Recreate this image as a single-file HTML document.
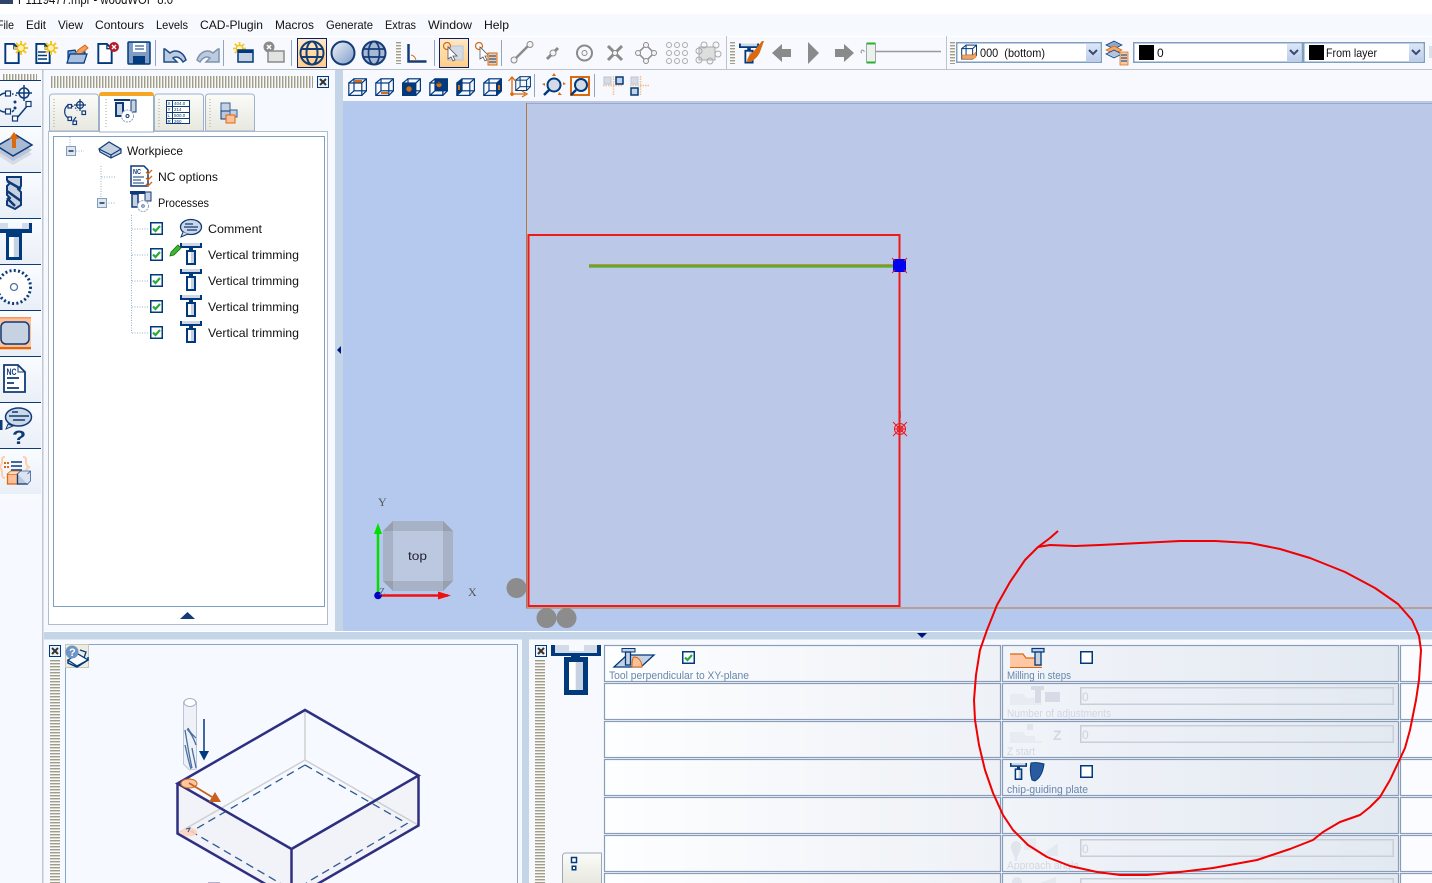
<!DOCTYPE html>
<html><head><meta charset="utf-8"><style>
html,body{margin:0;padding:0;width:1432px;height:883px;overflow:hidden;background:#f6f9ff}
svg{display:block}
text{font-family:"Liberation Sans",sans-serif;font-size:12px;fill:#111;white-space:pre}
</style></head><body>
<svg width="1432" height="883" viewBox="0 0 1432 883" xmlns="http://www.w3.org/2000/svg">
<defs>
<pattern id="gh" width="10" height="3" patternUnits="userSpaceOnUse"><rect width="10" height="1" fill="#a09e88"/><rect y="1" width="10" height="1" fill="#d4d3c6"/></pattern>
<pattern id="gv" width="3" height="10" patternUnits="userSpaceOnUse"><rect width="1" height="10" fill="#a09e88"/><rect x="1" width="1" height="10" fill="#d4d3c6"/></pattern>
<linearGradient id="cell" x1="0" x2="1" y1="0" y2="0"><stop offset="0" stop-color="#fdfeff"/><stop offset="1" stop-color="#eef1f6"/></linearGradient>
<linearGradient id="cell2" x1="0" x2="1" y1="0" y2="0"><stop offset="0" stop-color="#f1f4f9"/><stop offset="1" stop-color="#e3e9f1"/></linearGradient>
<linearGradient id="side" x1="0" x2="0" y1="0" y2="1"><stop offset="0" stop-color="#fafcff"/><stop offset="1" stop-color="#e9eff7"/></linearGradient>
<linearGradient id="act" x1="0" x2="0" y1="0" y2="1"><stop offset="0" stop-color="#ffe9c4"/><stop offset="1" stop-color="#ffcd86"/></linearGradient>
<linearGradient id="tab" x1="0" x2="0" y1="0" y2="1"><stop offset="0" stop-color="#fbfbf9"/><stop offset="1" stop-color="#e8e8e0"/></linearGradient>
<linearGradient id="btn" x1="0" x2="0" y1="0" y2="1"><stop offset="0" stop-color="#dbe6f8"/><stop offset="1" stop-color="#bccdec"/></linearGradient>
<linearGradient id="sph" x1="0" x2="1" y1="0" y2="1"><stop offset="0" stop-color="#eef2fa"/><stop offset="1" stop-color="#7f9cc8"/></linearGradient>
<linearGradient id="bodyg" x1="0" x2="1" y1="0" y2="0"><stop offset="0" stop-color="#fff"/><stop offset=".45" stop-color="#fff"/><stop offset=".5" stop-color="#c6d2e2"/><stop offset="1" stop-color="#c6d2e2"/></linearGradient>

<symbol id="tool" viewBox="0 0 22 22" overflow="visible">
<path fill="#003a7d" d="M0 0h22v5H0z"/><path fill="#cfd8e6" d="M2 0h18v3H2z"/><path fill="#003a7d" d="M9 5h4v3H9z"/>
<path fill="#003a7d" d="M6 7h10v15H6z"/><rect x="8" y="9" width="6" height="11" fill="url(#bodyg)"/>
</symbol>
<symbol id="chk" viewBox="0 0 13 13"><rect x=".75" y=".75" width="11.5" height="11.5" fill="#fff" stroke="#003a7d" stroke-width="1.5"/><path d="M3 6.5l2.5 2.5L10 4" fill="none" stroke="#2aa83a" stroke-width="2.2"/></symbol>
<symbol id="cb" viewBox="0 0 13 13"><rect x=".75" y=".75" width="11.5" height="11.5" fill="#fff" stroke="#003a7d" stroke-width="1.5"/></symbol>
<symbol id="cube" viewBox="0 0 19 18"><g fill="none" stroke="#003a7d" stroke-width="1.2"><rect x="6" y=".8" width="12.4" height="12"/><rect x=".8" y="5" width="13" height="12.4"/><path d="M.8 5L6 .8M13.8 5l4.6-4.2M13.8 17.4l4.6-4.6M.8 17.4L6 12.8"/></g></symbol>
<symbol id="minus" viewBox="0 0 10 10"><rect x=".5" y=".5" width="9" height="9" fill="#dde6f2" stroke="#7f9fc0"/><path d="M2.5 5h5" stroke="#000" stroke-width="1.2"/></symbol>
<symbol id="closex" viewBox="0 0 12 12"><rect x=".5" y=".5" width="11" height="11" fill="#eef2f8" stroke="#003a7d"/><path d="M3 3l6 6M9 3l-6 6" stroke="#333" stroke-width="2"/></symbol>
<symbol id="star" viewBox="0 0 14 14"><path d="M7 0v14M0 7h14M2 2l10 10M12 2L2 12" stroke="#f7c82a" stroke-width="2"/><circle cx="7" cy="7" r="3.4" fill="#fff5b0" stroke="#f3b600"/></symbol>
<symbol id="doc" viewBox="0 0 16 22"><path d="M1 1h9l5 5v15H1z" fill="#fff" stroke="#003a7d" stroke-width="2"/><path d="M10 1v5h5" fill="none" stroke="#003a7d" stroke-width="1.4"/></symbol>
</defs>

<!-- chrome -->
<rect x="0" y="0" width="1432" height="14" fill="#fff"/>
<rect x="0" y="0" width="13" height="4" fill="#2f4468"/>
<text x="18" y="4" textLength="155" lengthAdjust="spacingAndGlyphs" style="font-size:14px">P1119477.mpr - woodWOP 8.0</text>
<rect x="0" y="14" width="1432" height="22" fill="#f6f9fe"/>
<rect x="0" y="36" width="1432" height="1" fill="#fff"/>
<rect x="0" y="37" width="1432" height="32" fill="#f7f9fe"/>
<rect x="0" y="69" width="1432" height="1.5" fill="#bcc4cc"/>
<g>
<text x="-3" y="29" textLength="17" lengthAdjust="spacingAndGlyphs">File</text>
<text x="26" y="29" textLength="20" lengthAdjust="spacingAndGlyphs">Edit</text>
<text x="58" y="29" textLength="25" lengthAdjust="spacingAndGlyphs">View</text>
<text x="95" y="29" textLength="49" lengthAdjust="spacingAndGlyphs">Contours</text>
<text x="156" y="29" textLength="32" lengthAdjust="spacingAndGlyphs">Levels</text>
<text x="200" y="29" textLength="63" lengthAdjust="spacingAndGlyphs">CAD-Plugin</text>
<text x="275" y="29" textLength="39" lengthAdjust="spacingAndGlyphs">Macros</text>
<text x="326" y="29" textLength="47" lengthAdjust="spacingAndGlyphs">Generate</text>
<text x="385" y="29" textLength="31" lengthAdjust="spacingAndGlyphs">Extras</text>
<text x="428" y="29" textLength="44" lengthAdjust="spacingAndGlyphs">Window</text>
<text x="484" y="29" textLength="25" lengthAdjust="spacingAndGlyphs">Help</text>
</g>

<!-- main toolbar icons -->
<use href="#doc" x="4" y="43" width="16" height="21"/><use href="#star" x="14" y="41" width="14" height="14"/>
<use href="#doc" x="35" y="43" width="16" height="21"/><path d="M38 52h9M38 55.500h9M38 59h9" stroke="#003a7d" stroke-width="1.500"/><use href="#star" x="44" y="41" width="14" height="14"/>
<path d="M68 51l7-1 1 2h9l-1 11H68z" fill="#7f9cc4" stroke="#003a7d" stroke-width="1.200"/><path d="M74 56l4-6 7-5 3 3-6 5-2 3z" fill="#f3a060" stroke="#d96a10"/><path d="M67 63l3-9h17l-3 9z" fill="#a9bfdf" stroke="#003a7d" stroke-width="1.200"/>
<use href="#doc" x="97" y="43" width="16" height="21"/><circle cx="114" cy="47" r="5" fill="#b51c28"/><path d="M112 45l4 4M116 45l-4 4" stroke="#fff" stroke-width="1.400"/>
<path d="M129 42h20a1 1 0 0 1 1 1v20a1 1 0 0 1-1 1h-20a1 1 0 0 1-1-1V43a1 1 0 0 1 1-1z" fill="#7f9cc4" stroke="#003a7d" stroke-width="1.500"/><rect x="133" y="43" width="13" height="9" fill="#fff"/><path d="M135 46h9M135 49h9" stroke="#003a7d"/><rect x="133" y="56" width="12" height="8" fill="#003a7d"/>
<path d="M155.500 40v26M223.500 40v26M291.500 40v26M434.500 40v26M501.500 40v26" stroke="#8ea6c2"/>
<path d="M164 49v13h13l-4-4c3-2 7-1 10 4l3-2c-3-9-11-11-16-7l-5-4z" fill="#bccbe0" stroke="#1d4d88" stroke-width="1.500"/>
<path d="M219 49v13h-13l4-4c-3-2-7-1-10 4l-3-2c3-9 11-11 16-7l5-4z" fill="#bccbe0" stroke="#7f93ae" stroke-width="1.500"/>
<use href="#star" x="233" y="42" width="13" height="13"/><rect x="238" y="50" width="15" height="12" fill="#c6d2e2" stroke="#003a7d" stroke-width="1.500"/><rect x="238" y="50" width="15" height="3" fill="#003a7d"/>
<circle cx="269" cy="47" r="5.500" fill="#8a8a8a"/><path d="M267 45l4 4M271 45l-4 4" stroke="#fff" stroke-width="1.500"/><rect x="268" y="51" width="16" height="11" fill="#e2e2e2" stroke="#8a8a8a" stroke-width="1.500"/>
<rect x="297.500" y="38.500" width="29" height="29" fill="url(#act)" stroke="#0a1f70"/>
<g fill="none" stroke="#143d78" stroke-width="2"><circle cx="312" cy="53" r="11.500"/><ellipse cx="312" cy="53" rx="5.500" ry="11.500"/><path d="M301 49h22M301 57h22"/></g>
<circle cx="343" cy="53" r="11.500" fill="url(#sph)" stroke="#143d78" stroke-width="2"/>
<circle cx="374" cy="53" r="11.500" fill="#a8b9d4" stroke="#143d78" stroke-width="2"/><g fill="none" stroke="#143d78" stroke-width="1.700"><ellipse cx="374" cy="53" rx="5.500" ry="11.500"/><path d="M363 49h22M363 57h22"/></g>
<rect x="396" y="41" width="5" height="23" fill="url(#gh)"/>
<path d="M408.500 44v17.500h18" fill="none" stroke="#143d78" stroke-width="2.500"/><path d="M411 55a6 6 0 0 1 5 6" fill="none" stroke="#d96a10"/>
<rect x="439.500" y="38.500" width="29" height="29" fill="url(#act)" stroke="#0a1f70"/><rect x="448" y="46" width="15" height="14" fill="#d4dbe6" stroke="#b6c5da"/><circle cx="447" cy="46" r="3.500" fill="none" stroke="#d96a10" stroke-width="1.200"/><path d="M448 47v12l3-2 2 4 2-1-2-4h4z" fill="#fff" stroke="#555" stroke-width=".8"/>
<circle cx="479" cy="46" r="3.500" fill="none" stroke="#d96a10" stroke-width="1.200"/><path d="M480 47v12l3-2 2 4 2-1-2-4h4z" fill="#fff" stroke="#555" stroke-width=".8"/><rect x="488" y="53" width="9" height="12" fill="#f4c9a4" stroke="#d96a10"/><path d="M489 56h7M489 59h7M489 62h7" stroke="#003a7d"/>
<!-- snap icons -->
<g fill="none" stroke="#8a8a8a">
<path d="M515 59l14-14" stroke-width="2.500"/><circle cx="514" cy="60" r="3" fill="#f4f4f4"/><circle cx="530" cy="44.500" r="3" fill="#f4f4f4"/>
<path d="M547 59l11-11" stroke-width="3"/><circle cx="553" cy="53" r="3" fill="#f4f4f4"/>
<circle cx="584.500" cy="53" r="7.500" stroke-width="2"/><circle cx="584.500" cy="53" r="2.500"/>
<path d="M608 46l14 14M622 46l-14 14" stroke-width="3"/><circle cx="615" cy="53" r="2.500" fill="#f4f4f4"/>
<path d="M646 45l8 8-8 8-8-8z" stroke-width="1.500"/><circle cx="646" cy="45" r="2.500" fill="#f4f4f4"/><circle cx="654" cy="53" r="2.500" fill="#f4f4f4"/><circle cx="646" cy="61" r="2.500" fill="#f4f4f4"/><circle cx="638" cy="53" r="2.500" fill="#f4f4f4"/>
<g stroke="#aaa"><circle cx="669" cy="45" r="2.500"/><circle cx="677" cy="45" r="2.500"/><circle cx="685" cy="45" r="2.500"/><circle cx="669" cy="53" r="2.500"/><circle cx="677" cy="53" r="2.500"/><circle cx="685" cy="53" r="2.500"/><circle cx="669" cy="61" r="2.500"/><circle cx="677" cy="61" r="2.500"/><circle cx="685" cy="61" r="2.500"/></g>
<rect x="699" y="47" width="16" height="13" fill="#dedede" stroke="#aaa"/><g stroke="#aaa"><circle cx="699" cy="51" r="3"/><circle cx="704" cy="45" r="3"/><circle cx="716" cy="45" r="3"/><circle cx="718" cy="54" r="3"/><circle cx="699" cy="60" r="3"/><circle cx="710" cy="61" r="3"/></g>
</g>
<path d="M726.500 36v33M946.500 36v33" stroke="#bcc4cc"/>
<rect x="730" y="41" width="5" height="23" fill="url(#gh)"/><rect x="950" y="41" width="5" height="23" fill="url(#gh)"/>
<use href="#tool" x="739" y="43" width="20" height="21"/><path d="M747 62c0-5 4-9 7-11l8-10h2l-4 11c-2 5-8 11-13 10z" fill="#d96a10"/>
<path d="M772 53l10-9v5h9v8h-9v5z" fill="#8a8a8a"/><path d="M808 42l11 11-11 11z" fill="#8a8a8a"/><path d="M854 53l-10-9v5h-9v8h9v5z" fill="#8a8a8a"/>
<path d="M876 51.500h65" stroke="#999" stroke-width="1.500"/><path d="M862 53a1.500 1.500 0 1 1 2-1" fill="none" stroke="#999"/><rect x="866.500" y="43.500" width="9" height="19" rx="1" fill="#eef0ec" stroke="#9aa"/><rect x="866.500" y="42.500" width="9" height="2" fill="#2ab02e"/><rect x="866.500" y="61.500" width="9" height="2" fill="#2ab02e"/>

<!-- combos -->
<g fill="#fff" stroke="#7f9fc0" stroke-width="1.500">
<rect x="956.750" y="42.750" width="144.500" height="19.500"/><rect x="1133.750" y="42.750" width="168.500" height="19.500"/><rect x="1303.750" y="42.750" width="120.500" height="19.500"/>
</g>
<g fill="url(#btn)"><rect x="1086" y="44" width="14" height="17"/><rect x="1287" y="44" width="14" height="17"/><rect x="1409" y="44" width="14" height="17"/></g>
<g fill="none" stroke="#3b4b6c" stroke-width="2"><path d="M1089 50l4 4 4-4M1290 50l4 4 4-4M1412 50l4 4 4-4"/></g>
<use href="#cube" x="961" y="44" width="16" height="16"/><path d="M962 55h11l3-3v5l-3 2h-11z" fill="#f0a468" stroke="#d96a10" stroke-width=".6"/>
<text x="980" y="57" textLength="65" lengthAdjust="spacingAndGlyphs" xml:space="preserve">000  (bottom)</text>
<path d="M1106 45l8-4 8 4-8 4z" fill="#8fa8c9" stroke="#003a7d" stroke-width=".7"/><path d="M1106 50l8-4 8 4-8 4z" fill="#f3a868" stroke="#d96a10" stroke-width=".7"/><path d="M1106 54l8-4 8 4-8 4z" fill="#b3c4dc" stroke="#003a7d" stroke-width=".7"/><rect x="1120" y="52" width="8" height="13" fill="#f4c9a4" stroke="#d96a10" stroke-width=".7"/><path d="M1121 55h6M1121 58h6M1121 61h6" stroke="#003a7d"/>
<rect x="1139" y="45" width="15" height="15" fill="#000"/><text x="1157" y="57">0</text>
<rect x="1309" y="45" width="15" height="15" fill="#000"/><text x="1326" y="57" textLength="51" lengthAdjust="spacingAndGlyphs">From layer</text>
<rect x="1429" y="46" width="3" height="12" fill="#d8e0ec"/>

<!-- left column -->
<rect x="0" y="70" width="42" height="430" fill="#f8fafe"/>
<rect x="2" y="74" width="35" height="6" fill="url(#gv)"/>
<rect x="42" y="70" width="1.500" height="813" fill="#c0c8d2"/>
<g fill="url(#side)"><rect x="0" y="81" width="41" height="45"/><rect x="0" y="127" width="41" height="45"/><rect x="0" y="173" width="41" height="45"/><rect x="0" y="219" width="41" height="45"/><rect x="0" y="265" width="41" height="45"/><rect x="0" y="311" width="41" height="45"/><rect x="0" y="357" width="41" height="45"/><rect x="0" y="403" width="41" height="45"/><rect x="0" y="449" width="41" height="45"/></g>
<path d="M0 80.500h41M0 126.500h41M0 172.500h41M0 218.500h41M0 264.500h41M0 310.500h41M0 356.500h41M0 402.500h41M0 448.500h41" stroke="#0f3a78"/>
<!-- ico1 -->
<g fill="none" stroke="#0f3a78"><path d="M-2 97c3-3 5-4 8-4M-2 109c3 2 4 3 7 3M12 112l2-2M17 118l11-13" stroke-width="1.500"/><path d="M12 94c3 0 6 2 4 3" stroke-dasharray="1.500 2" stroke-width="1.500"/><circle cx="15" cy="102" r="1" fill="#0f3a78"/><circle cx="15" cy="108" r="1" fill="#0f3a78"/><rect x="5.500" y="91" width="5" height="5" fill="#fff" stroke-width="1.200"/><rect x="5.500" y="109" width="5" height="5" fill="#fff" stroke-width="1.200"/><rect x="26" y="101.500" width="5" height="5" fill="#fff" stroke-width="1.200"/><rect x="12.500" y="116" width="5" height="5" fill="#fff" stroke-width="1.200"/><circle cx="24" cy="93" r="5" stroke-width="1.500"/><path d="M24 85v16M16 93h16" stroke-width="1.500"/></g>
<!-- ico2 -->
<path d="M-3 155l16 10 19-11-16-10z" fill="#d6dce6"/><path d="M-3 151l16 10 19-11-16-10z" fill="#b9c6da"/><path d="M-3 146l16 10 19-11-16-10z" fill="#a9bad3" stroke="#0f3a78" stroke-width="1.500"/><path d="M14 132l-5 7h3v9h4v-9h3z" fill="#d96a10"/>
<!-- drill -->
<path d="M7 177h14v9l-3 3 3 3v13l-6 4-8-4v-4l3-3-3-3v-9l3-3-3-3z" fill="#c6d2e2" stroke="#0f3a78" stroke-width="2"/><path d="M7 181l14 8M7 191l14 10M7 198l8 8" stroke="#0f3a78" stroke-width="2.500"/>
<!-- T -->
<path fill="#003a7d" d="M0 223h32v10H0z"/><path fill="#d3dbe8" d="M0 223h29v6H0z"/><path fill="#f6f9ff" d="M8 223h14v5H8z"/><path fill="#003a7d" d="M6 233h16v27H6z"/><rect x="9" y="237" width="10" height="20" fill="url(#bodyg)"/>
<!-- saw -->
<circle cx="14" cy="287" r="15.500" fill="#fff"/><circle cx="14" cy="287" r="16.500" fill="none" stroke="#0f3a78" stroke-width="3" stroke-dasharray="2 2.300"/><circle cx="14" cy="287" r="3.500" fill="#fff" stroke="#53739c" stroke-width="1.300"/>
<!-- contour active -->
<rect x="0" y="317" width="31" height="33" fill="#ffbf98"/><rect x="0" y="347" width="31" height="2" fill="#d96a10"/><rect x="0" y="317" width="31" height="1.500" fill="#ee9a60"/>
<rect x="1" y="322" width="28" height="22" rx="5" fill="#c6d2e2" stroke="#0f3a78" stroke-width="1.500"/>
<!-- NC doc -->
<path d="M4 365h14l7 7v20H4z" fill="#fff" stroke="#0f3a78" stroke-width="1.800"/><path d="M18 365v7h7" fill="none" stroke="#0f3a78"/><text x="6.500" y="375" textLength="10" lengthAdjust="spacingAndGlyphs" style="font-size:9px;font-weight:bold;fill:#0f3a78">NC</text><path d="M7 378h12M7 383h7M7 388h12" stroke="#0f3a78" stroke-width="1.800"/>
<!-- help -->
<ellipse cx="18.500" cy="417" rx="13" ry="9" fill="#cdd8e6" stroke="#0f3a78" stroke-width="1.500"/><path d="M8 424l-2 5 7-3z" fill="#cdd8e6" stroke="#0f3a78"/><path d="M12 412h6M9 416h20M13 420h12" stroke="#0f3a78" stroke-width="1.500"/>
<rect x="0" y="420" width="2.500" height="10" fill="#0f3a78"/>
<text x="12" y="444" textLength="14" lengthAdjust="spacingAndGlyphs" style="font-size:19px;font-weight:bold;fill:#0f3a78">?</text>
<!-- list/brace -->
<path d="M5 457c-3 0-3 1-3 5s-2 4-3 5c1 1 3 1 3 5s0 6 3 6M23 457c3 0 3 1 3 5s2 4 3 5c-1 1-3 1-3 5" fill="none" stroke="#ffccb0" stroke-width="2"/>
<path d="M4 462h2v2H4zM7 462h2v2H7zM4 466h2v2H4zM7 466h2v2H7z" fill="#d96a10"/><path d="M11 462h11M11 466h11M11 470h11" stroke="#0f3a78" stroke-width="1.500"/>
<rect x="7.500" y="474" width="10" height="10" fill="#ffbf98" stroke="#d96a10" stroke-width="1.300"/><path d="M7.500 474l3-3h10l-3 3" fill="#ffd8c0" stroke="#d96a10" stroke-width=".8"/><rect x="17.500" y="474" width="10" height="10" fill="#b8c8de" stroke="#0f3a78" stroke-width="1.300"/><path d="M17.500 474l3-3h10v10l-3 3M27.500 474l3-3" fill="#dbe4f0" stroke="#33609a" stroke-width=".8"/>

<!-- tree panel -->
<rect x="44" y="70" width="291" height="562" fill="#f6f9ff"/>
<rect x="50" y="76" width="263" height="12" fill="url(#gv)"/>
<use href="#closex" x="317" y="76" width="12" height="12"/>
<rect x="48.500" y="131.500" width="279" height="493" fill="#fff" stroke="#b4bcc6"/>
<!-- tabs -->
<path d="M49.500 131v-34a3 3 0 0 1 3-3h43a3 3 0 0 1 3 3v34z" fill="url(#tab)" stroke="#9db2c8"/>
<path d="M154.500 131v-34a3 3 0 0 1 3-3h43a3 3 0 0 1 3 3v34z" fill="url(#tab)" stroke="#9db2c8"/>
<path d="M205.500 131v-34a3 3 0 0 1 3-3h43a3 3 0 0 1 3 3v34z" fill="url(#tab)" stroke="#9db2c8"/>
<path d="M99.500 132V96a3 3 0 0 1 3-3h48a3 3 0 0 1 3 3v36z" fill="#fff" stroke="#9db2c8"/>
<path d="M99 96v-1a3 3 0 0 1 3-3h49a3 3 0 0 1 3 3v1z" fill="#f5a623"/>
<path d="M54 99v28M106 99v28M159 99v28M210 99v28" stroke="#a8a690" stroke-dasharray="1 2"/>
<!-- tab icons -->
<g fill="none" stroke="#0f3a78" stroke-width="1.200"><path d="M68 105a8 8 0 0 0 0 13"/><path d="M72 106c3 1 5 3 5 5" stroke-dasharray="1.500 2"/><path d="M76 117l-3 4" /><rect x="68" y="104.500" width="3.500" height="3.500" fill="#fff"/><rect x="68" y="117" width="3.500" height="3.500" fill="#fff"/><rect x="82" y="111" width="3.500" height="3.500" fill="#fff"/><rect x="73" y="121" width="3.500" height="3.500" fill="#fff"/><circle cx="80" cy="105" r="3.500"/><path d="M80 99v12M74 105h12"/></g>
<g fill="none" stroke="#0f3a78"><path d="M114 100h16" stroke-width="2"/><rect x="116" y="103" width="7" height="13" fill="#c6d2e2" stroke-width="2"/><path d="M131 100h5v12h-5z" fill="#c6d2e2"/><circle cx="127.500" cy="116" r="6" stroke="#8ba0bd" stroke-dasharray="2 1" fill="#fff"/><circle cx="127.500" cy="116" r="1.500"/></g>
<rect x="166.500" y="100.500" width="23" height="23" fill="#fff" stroke="#0f3a78"/><path d="M166 106.500h24M166 112.500h24M166 118.500h24M172.500 100v24" stroke="#0f3a78"/><g><text x="167.500" y="105" style="font-size:4.500px;fill:#0f3a78">X</text><text x="167.500" y="111" style="font-size:4.500px;fill:#0f3a78">Y</text><text x="167.500" y="117" style="font-size:4.500px;fill:#0f3a78">L</text><text x="167.500" y="123" style="font-size:4.500px;fill:#0f3a78">R</text><text x="174" y="105" style="font-size:4.500px;fill:#0f3a78">404.0</text><text x="174" y="111" style="font-size:4.500px;fill:#0f3a78">214</text><text x="174" y="117" style="font-size:4.500px;fill:#0f3a78">500.0</text><text x="174" y="123" style="font-size:4.500px;fill:#0f3a78">260</text></g>
<rect x="221" y="103" width="9" height="8" fill="#c6d2e2" stroke="#33609a"/><rect x="221" y="111" width="9" height="8" fill="#b8c8de" stroke="#0f3a78"/><rect x="230" y="110" width="7" height="7" fill="#c6d2e2" stroke="#33609a"/><rect x="226" y="115" width="9" height="8" fill="#ffbf98" stroke="#d96a10"/>
<!-- tree -->
<rect x="53.500" y="136.500" width="271" height="470" fill="#fff" stroke="#7f9fc0"/>
<path d="M187.500 612l7.500 7h-15z" fill="#143d78"/>
<g stroke="#8fb0d0" stroke-dasharray="1 1.500" fill="none"><path d="M76 151h8M70 137v10M101 166v32M101.500 177h14M106 203h9M131.500 215v118M132 229h16M132 255h16M132 281h16M132 307h16M132 333h16"/></g>
<use href="#minus" x="66" y="146" width="10" height="10"/><use href="#minus" x="97" y="198" width="10" height="10"/>
<path d="M99 149l10-7 12 7v4l-10 5-11-6z" fill="#c6d2e2" stroke="#0f3a78" stroke-width="1.200"/><path d="M99 149l12 6 10-6M111 155v3" fill="none" stroke="#0f3a78" stroke-width="1.200"/>
<path d="M131 166h13l4 4v16h-17z" fill="#fff" stroke="#0f3a78" stroke-width="1.500"/><text x="133" y="174" textLength="8" lengthAdjust="spacingAndGlyphs" style="font-size:7px;font-weight:bold;fill:#0f3a78">NC</text><path d="M133 177h11M133 180h8M133 183h11" stroke="#0f3a78"/><path d="M146 172l2 2 4-4M146 178l2 2 4-4M146 184l2 2 4-4" fill="none" stroke="#d96a10" stroke-width="1.300"/>
<rect x="130" y="191" width="15" height="3" fill="#0f3a78"/><rect x="132" y="194" width="6" height="13" fill="#c6d2e2" stroke="#0f3a78" stroke-width="1.500"/><rect x="145" y="192" width="6" height="9" fill="#c6d2e2" stroke="#0f3a78"/><circle cx="143" cy="206" r="5.500" fill="#fff" stroke="#8ba0bd" stroke-dasharray="2 1"/><circle cx="143" cy="206" r="1.300" fill="none" stroke="#53739c"/>
<ellipse cx="191" cy="227" rx="10.500" ry="7.500" fill="#cdd8e6" stroke="#0f3a78" stroke-width="1.300"/><path d="M183 232l-2 5 7-3" fill="#cdd8e6" stroke="#0f3a78"/><path d="M185 224h8M184 227h14M187 230h10" stroke="#0f3a78" stroke-width="1.300"/>
<use href="#chk" x="150" y="222" width="13" height="13"/><use href="#chk" x="150" y="248" width="13" height="13"/><use href="#chk" x="150" y="274" width="13" height="13"/><use href="#chk" x="150" y="300" width="13" height="13"/><use href="#chk" x="150" y="326" width="13" height="13"/>
<use href="#tool" x="180" y="243" width="22" height="22"/><use href="#tool" x="180" y="269" width="22" height="22"/><use href="#tool" x="180" y="295" width="22" height="22"/><use href="#tool" x="180" y="321" width="22" height="22"/>
<path d="M171 252l7-7 3 3-7 7-4 1z" fill="#3fb52e" stroke="#1b6b12" stroke-width=".8"/>
<text x="127" y="155" textLength="56" lengthAdjust="spacingAndGlyphs">Workpiece</text>
<text x="158" y="181" textLength="60" lengthAdjust="spacingAndGlyphs">NC options</text>
<text x="158" y="207" textLength="51" lengthAdjust="spacingAndGlyphs">Processes</text>
<text x="208" y="233" textLength="54" lengthAdjust="spacingAndGlyphs">Comment</text>
<text x="208" y="259" textLength="91" lengthAdjust="spacingAndGlyphs">Vertical trimming</text>
<text x="208" y="285" textLength="91" lengthAdjust="spacingAndGlyphs">Vertical trimming</text>
<text x="208" y="311" textLength="91" lengthAdjust="spacingAndGlyphs">Vertical trimming</text>
<text x="208" y="337" textLength="91" lengthAdjust="spacingAndGlyphs">Vertical trimming</text>

<!-- bands -->
<rect x="335" y="70" width="8" height="562" fill="#c5d5e8"/>
<path d="M341 346v8l-4-4z" fill="#00137a"/>

<!-- toolbar2 -->
<rect x="343" y="70" width="1089" height="31" fill="#f7f9fe"/>
<use href="#cube" x="348" y="78" width="19" height="18"/><rect x="355" y="80" width="7" height="2.500" fill="#d96a10"/>
<use href="#cube" x="375" y="78" width="19" height="18"/><rect x="381" y="92" width="7" height="2" fill="#d96a10"/>
<use href="#cube" x="402" y="78" width="19" height="18"/><rect x="402" y="83" width="14" height="13" fill="#003a7d"/><circle cx="409" cy="89" r="2.700" fill="#d96a10"/>
<use href="#cube" x="429" y="78" width="19" height="18"/><rect x="435" y="78.500" width="13" height="12.500" fill="#003a7d"/><circle cx="439" cy="84.500" r="2.700" fill="#d96a10"/><rect x="430" y="83" width="13" height="12" fill="none" stroke="#003a7d"/>
<use href="#cube" x="456" y="78" width="19" height="18"/><path d="M456.500 83l5-4v13l-5 4z" fill="#003a7d"/><rect x="458" y="85" width="2" height="5" fill="#d96a10"/>
<use href="#cube" x="483" y="78" width="19" height="18"/><path d="M496 83l5.500-4v13l-5.500 4z" fill="#003a7d"/><rect x="498" y="85" width="2" height="5" fill="#d96a10"/>
<use href="#cube" x="515" y="76" width="16" height="15"/><path d="M512 96V78M508.500 81l3.500-4 3.500 4M512 94h13M522 91l5 3-5 3" fill="none" stroke="#d96a10" stroke-width="1.300"/><circle cx="512" cy="94" r="1.800" fill="#d96a10"/>
<path d="M534.500 74v23M594.500 74v23" stroke="#8ea6c2"/>
<circle cx="554" cy="85" r="6.500" fill="#d3dbe8" stroke="#003a7d" stroke-width="2"/><path d="M549 90l-5 5" stroke="#003a7d" stroke-width="2.500"/><path d="M552 76h4l-2-3zM563 85v-3l3 2zM545 83v3l-3-2zM559 92l3 3-4 0z" fill="#d96a10"/>
<rect x="570" y="76" width="20" height="20" fill="#d96a10"/><rect x="572" y="78" width="16" height="16" fill="#f7f9fe"/><circle cx="581" cy="85" r="6" fill="#d3dbe8" stroke="#003a7d" stroke-width="2"/><path d="M576 90l-5 5" stroke="#003a7d" stroke-width="2.500"/>
<path d="M603 85.500h20M613.500 76v20" stroke="#f0c090" stroke-dasharray="1.500 1" stroke-width="1.500"/><rect x="604" y="77" width="7" height="7" fill="#d4dbe6" stroke="#b8c4d6"/><rect x="616" y="77" width="7" height="7" fill="#c6d2e2" stroke="#003a7d" stroke-width="1.500"/>
<path d="M630 85.500h20M640.500 76v20" stroke="#f0c090" stroke-dasharray="1.500 1" stroke-width="1.500"/><rect x="631" y="77" width="7" height="7" fill="#d4dbe6" stroke="#b8c4d6"/><rect x="631" y="88" width="7" height="7" fill="#c6d2e2" stroke="#003a7d" stroke-width="1.500"/>

<!-- viewport -->
<rect x="343" y="101" width="1089" height="530" fill="#b5c9ef"/>
<rect x="527" y="103" width="905" height="505" fill="#bbc8e8"/>
<path d="M526.500 103.500h906" stroke="#a5a8b8"/><path d="M526.500 103v505h906" fill="none" stroke="#b5793c"/>
<rect x="528.500" y="235" width="371" height="371" fill="none" stroke="#f01818" stroke-width="2"/>
<path d="M589 266h305" stroke="#5bb43a" stroke-width="3.500"/><path d="M589 265.500h305" stroke="#9a8a1e" stroke-width="1.600"/>
<rect x="893" y="259" width="13" height="13" rx="1.500" fill="#0000f0"/><path d="M892 258l3 3M907 258l-3 3M892 273l3-3M907 273l-3-3" stroke="#e02020"/>
<path d="M900 411v7" stroke="#f01818" stroke-width="1.500"/>
<g fill="none" stroke="#f01818"><circle cx="900" cy="429" r="5.500"/><circle cx="900" cy="429" r="3"/><path d="M893 422l14 14M907 422l-14 14M894 429h12"/></g>
<!-- gizmo -->
<path d="M393 521h50l10 10v50l-10 10h-50l-10-10v-50z" fill="#a7b2c7"/><rect x="393" y="531" width="50" height="50" fill="#bcc8e0"/>
<path d="M383 531l10-10v10zM453 531l-10-10v10zM383 581l10 10v-10zM453 581l-10 10v-10z" fill="#98a0b0"/>
<text x="408" y="560" textLength="19" lengthAdjust="spacingAndGlyphs" style="fill:#223">top</text>
<path d="M378 595v-68" stroke="#00e000" stroke-width="2.500"/><path d="M378 523l-4 11h8z" fill="#00e000"/>
<path d="M378 595.500h70" stroke="#f01010" stroke-width="2.500"/><path d="M451 595.500l-13-4v8z" fill="#f01010"/>
<circle cx="378" cy="595.500" r="3.800" fill="#0000c0"/>
<text x="378" y="506" style="font-family:'Liberation Serif',serif;font-size:12px;fill:#555">Y</text>
<text x="468" y="596" style="font-family:'Liberation Serif',serif;font-size:12px;fill:#555">X</text>
<text x="379" y="595" style="font-family:'Liberation Serif',serif;font-size:10px;fill:#667">Z</text>
<circle cx="516.500" cy="588" r="10" fill="#8c8c8c"/><circle cx="546.500" cy="618" r="10" fill="#8c8c8c"/><circle cx="566.500" cy="618" r="10" fill="#8c8c8c"/>

<!-- bottom band -->
<rect x="44" y="631" width="1388" height="1" fill="#fff"/>
<rect x="44" y="632" width="1388" height="7.500" fill="#c5d5e8"/>
<rect x="522" y="639" width="7" height="244" fill="#c5d5e8"/>
<path d="M917 633h10l-5 5z" fill="#00137a"/>

<!-- bottom left -->
<rect x="44" y="639.500" width="478" height="244" fill="#f6f9ff"/>
<path d="M65.500 644.500H517.500V883M65.500 644.500V883" fill="none" stroke="#8aa6c4"/>
<use href="#closex" x="49" y="645" width="12" height="12"/>
<rect x="50" y="660" width="10" height="223" fill="url(#gh)"/>
<rect x="65.500" y="644.500" width="23" height="23" fill="#ecece0" stroke="#c8c8b8"/>
<path d="M68 660l10-6 10 6-11 6z" fill="#fff" stroke="#003a7d" stroke-width="1.300"/><path d="M68 660v3l9 4 11-7v-3" fill="none" stroke="#003a7d" stroke-width="1.500"/><path d="M80 650l6 2-2 6" fill="none" stroke="#003a7d" stroke-width="1.300"/><circle cx="72" cy="652" r="6.500" fill="#6f95c6"/><text x="69" y="656" style="font-size:11px;font-weight:bold;fill:#fff">?</text>
<!-- 3D box -->
<path d="M177.500 783.500v50L291.500 899V849zM291.500 849l127-73.500v50L291.500 899z" fill="#f2f3f9"/>
<path d="M305 710v50M305 760L178 833M305 760l113 65" stroke="#cfcfcf" stroke-width="1.500" fill="none"/>
<path d="M305 765L191.500 831.500 290 889M305 765l102 58.500L306 883" fill="none" stroke="#2d5a92" stroke-width="1.300" stroke-dasharray="8 5"/>
<path d="M305 710L418.500 775.500 291.500 849 177.500 783.500zM177.500 783.500v50L291.500 899M291.500 849v50M418.500 775.500v50L291.500 899" fill="none" stroke="#2f2f80" stroke-width="2.500"/>
<ellipse cx="189" cy="783.500" rx="8" ry="4.500" fill="#ffc7a6" stroke="#d96a10"/><ellipse cx="189" cy="832" rx="8" ry="4.500" fill="#ffd2bb" opacity=".9"/><path d="M186 829l4-1-2 4" fill="none" stroke="#2d5a92"/><path d="M189 783l23 14" stroke="#c7611c" stroke-width="1.800"/><path d="M221 802l-12 0 6-10z" fill="#c7611c"/>
<path d="M183.500 702v62l6 6 7-1V702z" fill="#eef1f8" stroke="#bcc5d5"/><ellipse cx="190" cy="702.500" rx="6" ry="4" fill="#fff" stroke="#a2aec2"/><path d="M185 730c2 12 4 25 7 38M188 728c2 5 6 8 8 10M196 745c-2-6-5-12-9-16M185 745c2 8 3 15 6 24M192 748c1 6 3 14 4 20" fill="none" stroke="#49709f" stroke-width="1.300"/>
<path d="M204 719v37" stroke="#003a7d" stroke-width="1.500"/><path d="M199 751h10l-5 9.500z" fill="#003a7d"/>
<rect x="208" y="882" width="12" height="1" fill="#b4aed6"/>

<!-- bottom right -->
<rect x="529" y="639.500" width="903" height="244" fill="#f7f9ff"/>
<use href="#closex" x="535" y="645" width="12" height="12"/>
<rect x="535" y="660" width="10" height="223" fill="url(#gh)"/>
<path fill="#003a7d" d="M551 645h50v11h-50z"/><path fill="#d3dbe8" d="M555 645h42v8h-42z"/><path fill="#f6f9ff" d="M569 645h15v6h-15z"/><path fill="#003a7d" d="M571 656h9v2h-9z"/>
<path fill="#003a7d" d="M564 657h24v38h-24z"/><rect x="569" y="662" width="14" height="28" fill="url(#bodyg)"/>
<path d="M562.500 883v-27a3 3 0 0 1 3-3h36v30" fill="url(#tab)" stroke="#9aa9b8"/>
<rect x="571.500" y="857.500" width="5" height="5" fill="#fff" stroke="#003a7d" stroke-width="1.500"/><rect x="571.500" y="865.500" width="5" height="5" fill="#003a7d"/><rect x="573" y="867" width="2" height="2" fill="#fff"/>
<!-- cells -->
<g fill="url(#cell)" stroke="#8a9db8" stroke-width="1.200">
<rect x="604.500" y="645.500" width="396" height="36"/><rect x="604.500" y="683.500" width="396" height="36"/><rect x="604.500" y="721.500" width="396" height="36"/><rect x="604.500" y="759.500" width="396" height="36"/><rect x="604.500" y="797.500" width="396" height="36"/><rect x="604.500" y="835.500" width="396" height="36"/><rect x="604.500" y="873.500" width="396" height="36"/>
</g>
<g fill="url(#cell2)" stroke="#8a9db8" stroke-width="1.200">
<rect x="1002.500" y="645.500" width="396" height="36"/><rect x="1002.500" y="683.500" width="396" height="36"/><rect x="1002.500" y="721.500" width="396" height="36"/><rect x="1002.500" y="759.500" width="396" height="36"/><rect x="1002.500" y="797.500" width="396" height="36"/><rect x="1002.500" y="835.500" width="396" height="36"/><rect x="1002.500" y="873.500" width="396" height="36"/>
</g>
<g fill="#fbfcff" stroke="#8a9db8" stroke-width="1.200">
<rect x="1400.500" y="645.500" width="40" height="36"/><rect x="1400.500" y="683.500" width="40" height="36"/><rect x="1400.500" y="721.500" width="40" height="36"/><rect x="1400.500" y="759.500" width="40" height="36"/><rect x="1400.500" y="797.500" width="40" height="36"/><rect x="1400.500" y="835.500" width="40" height="36"/><rect x="1400.500" y="873.500" width="40" height="36"/>
</g>
<!-- cell contents -->
<path d="M614 667l13-12h27l-13 12z" fill="#c6d2e2" stroke="#003a7d" stroke-width="1.300"/><path d="M632 667c0-4 0-9 2-10 5 0 8 5 8 10z" fill="#ffbf98" stroke="#d96a10"/><rect x="622" y="648.500" width="13" height="3.500" fill="#c6d2e2" stroke="#003a7d"/><rect x="625.500" y="652" width="5" height="13" fill="#c6d2e2" stroke="#003a7d" stroke-width="1.300"/>
<use href="#chk" x="682" y="651" width="13" height="13"/>
<text x="609" y="679" textLength="140" lengthAdjust="spacingAndGlyphs" style="font-size:11px;fill:#6786ac">Tool perpendicular to XY-plane</text>
<path d="M1010 667v-13h13l3 4h8v7h7v2z" fill="#ffc7a6"/><path d="M1010 654h13l3 4h9v7h7" fill="none" stroke="#d96a10" stroke-width="1.300"/><path d="M1010 667.500h32" stroke="#d96a10"/><rect x="1032" y="648.500" width="12" height="3.500" fill="#c6d2e2" stroke="#003a7d" stroke-width="1.200"/><rect x="1035" y="652" width="6" height="13" fill="#c6d2e2" stroke="#003a7d" stroke-width="1.300"/>
<use href="#cb" x="1080" y="651" width="13" height="13"/>
<text x="1007" y="679" textLength="64" lengthAdjust="spacingAndGlyphs" style="font-size:11px;fill:#6786ac">Milling in steps</text>
<path d="M1010 705v-11h13l3 4h9v5h7v2z" fill="#e8ebf2"/><rect x="1031" y="686" width="13" height="4" fill="#d6dbe5"/><rect x="1035" y="690" width="6" height="13" fill="#d6dbe5"/><rect x="1045" y="692" width="15" height="10" fill="#d6dbe5"/>
<text x="1007" y="717" textLength="104" lengthAdjust="spacingAndGlyphs" style="font-size:11px;fill:#d2d7e0">Number of adjustments</text>
<rect x="1080.750" y="687.750" width="312.500" height="16.500" fill="none" stroke="#c9cfd9" stroke-width="1.500"/><text x="1082" y="701" style="font-size:12px;fill:#cdd2da">0</text>
<path d="M1010 743v-11h13l3 4h9v5h7v2z" fill="#e8ebf2"/><rect x="1027" y="724" width="6" height="6" fill="#e0e4ec"/>
<text x="1053" y="740" style="font-size:14px;font-weight:bold;fill:#d2d7e0">Z</text>
<text x="1007" y="755" textLength="28" lengthAdjust="spacingAndGlyphs" style="font-size:11px;fill:#d2d7e0">Z start</text>
<rect x="1080.750" y="725.750" width="312.500" height="16.500" fill="none" stroke="#c9cfd9" stroke-width="1.500"/><text x="1082" y="739" style="font-size:12px;fill:#cdd2da">0</text>
<use href="#tool" x="1010" y="762" width="17" height="19" /><path d="M1031 763c5-1 9 0 13 1-1 8-4 14-9 17l-3-1c-2-6-2-12-1-17z" fill="#2a5b9e" stroke="#003a7d"/>
<use href="#cb" x="1080" y="765" width="13" height="13"/>
<text x="1007" y="793" textLength="81" lengthAdjust="spacingAndGlyphs" style="font-size:11px;fill:#6786ac">chip-guiding plate</text>
<circle cx="1016" cy="846" r="5" fill="#e0e4ec"/><path d="M1012 848l4 10 4-10zM1016 855v6" fill="#e0e4ec" stroke="#e0e4ec" stroke-width="2"/><rect x="1024" y="838" width="12" height="12" fill="#e8ebf2"/><path d="M1040 856l18-13v13z" fill="#e4e8ef"/>
<text x="1007" y="869" textLength="72" lengthAdjust="spacingAndGlyphs" style="font-size:11px;fill:#d2d7e0">Approach angle</text>
<rect x="1080.750" y="839.750" width="312.500" height="16.500" fill="none" stroke="#c9cfd9" stroke-width="1.500"/><text x="1082" y="853" style="font-size:12px;fill:#cdd2da">0</text>
<circle cx="1017" cy="882" r="5" fill="#e0e4ec"/><path d="M1040 883l16-6v6z" fill="#e4e8ef"/>
<rect x="1080.750" y="878.750" width="312.500" height="8" fill="none" stroke="#c9cfd9" stroke-width="1.500"/>

<!-- red annotation -->
<polyline fill="none" stroke="#f00000" stroke-width="2" stroke-linejoin="round" points="1058,531 1050,538 1038,547 1050,545 1075,546 1100,545 1140,543 1180,541 1215,541 1250,543 1280,549 1310,558 1345,572 1375,588 1398,604 1412,620 1419,636 1421,650 1419,680 1416,700 1410,730 1405,748 1398,763 1390,780 1380,797 1370,807 1360,815 1340,822 1323,832 1313,840 1290,849 1257,860 1235,864 1213,868 1180,872 1147,875 1120,875 1097,872 1070,866 1047,857 1028,845 1013,830 1003,815 993,793 985,770 979,745 975,720 974,700 976,675 980,650 987,630 997,605 1010,582 1025,560 1038,547"/>
</svg>
</body></html>
